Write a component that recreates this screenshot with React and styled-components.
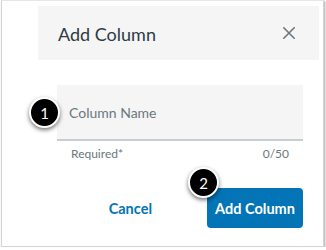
import React from "react";
import styled, { createGlobalStyle } from "styled-components";

const Global = createGlobalStyle`
  html, body { margin: 0; padding: 0; background: #ffffff; }
  body { font-family: Lato, "Open Sans", sans-serif; }
  * { box-sizing: border-box; }
`;

const Frame = styled.div`
  width: 323px;
  height: 247px;
  margin-left: 1px;
  border: 1px solid #d4d4d4;
  border-top-color: #e6e6e6;
  box-shadow: 1px 1px 2px rgba(0, 0, 0, 0.35);
  padding: 5px 4px 0 36px;
  background: #fff;
  display: flex;
  flex-direction: column;
`;

const Header = styled.div`
  height: 54px;
  background: #f5f5f5;
  display: flex;
  align-items: center;
  justify-content: space-between;
  padding: 0 24px 0 20px;
`;

const Title = styled.h2`
  margin: 0;
  font-size: 18px;
  font-weight: 400;
  color: #2d3b45;
  line-height: 1;
  padding-top: 1px;
`;

const CloseButton = styled.button`
  border: 0;
  background: none;
  padding: 0;
  width: 12px;
  height: 12px;
  display: flex;
  cursor: pointer;
`;

const Body = styled.div`
  padding: 25px 16px 0 19px;
  display: flex;
  flex-direction: column;
`;

const InputWrap = styled.div`
  position: relative;
`;

const Input = styled.div`
  height: 56px;
  background: #f5f5f5;
  border-bottom: 2px solid #c7cdd1;
  display: flex;
  align-items: center;
  padding: 1px 12px 0 12px;
  font-size: 14px;
  color: #6b7780;
`;

const Helper = styled.div`
  display: flex;
  justify-content: space-between;
  padding: 5px 14px 0 14px;
  font-size: 12px;
  color: #6b7780;
`;

const Actions = styled.div`
  display: flex;
  justify-content: flex-end;
  align-items: center;
  margin-top: 27px;
  gap: 55px;
`;

const TextButton = styled.button`
  border: 0;
  background: none;
  padding: 0;
  font-family: Lato, sans-serif;
  font-weight: 700;
  font-size: 14.5px;
  color: #0374b5;
`;

const PrimaryWrap = styled.div`
  position: relative;
`;

const PrimaryButton = styled.button`
  border: 0;
  border-radius: 4px;
  background: #0374b5;
  color: #fff;
  font-family: Lato, sans-serif;
  font-weight: 700;
  font-size: 14.5px;
  height: 40px;
  width: 96px;
  padding: 0;
`;

const Badge = styled.div`
  position: absolute;
  left: ${(p) => p.$left}px;
  top: ${(p) => p.$top}px;
  width: 31px;
  height: 31px;
  border-radius: 50%;
  background: #000;
  border: 2px solid #fff;
  box-shadow: 0 2px 4px rgba(0, 0, 0, 0.55);
  color: #fff;
  font-size: 15px;
  display: flex;
  align-items: center;
  justify-content: center;
  z-index: 2;
`;

export default function App() {
  return (
    <>
      <Global />
      <Frame>
        <Header>
          <Title>Add Column</Title>
          <CloseButton aria-label="Close">
            <svg width="12" height="12" viewBox="0 0 12 12">
              <path d="M0.8 0.8 L11.2 11.2 M11.2 0.8 L0.8 11.2" stroke="#6b7780" strokeWidth="1.6" strokeLinecap="round" />
            </svg>
          </CloseButton>
        </Header>
        <Body>
          <InputWrap>
            <Input>Column Name</Input>
            <Badge $left={-28} $top={12}>1</Badge>
          </InputWrap>
          <Helper>
            <span>Required*</span>
            <span>0/50</span>
          </Helper>
          <Actions>
            <TextButton>Cancel</TextButton>
            <PrimaryWrap>
              <PrimaryButton>Add Column</PrimaryButton>
              <Badge $left={-19} $top={-21}>2</Badge>
            </PrimaryWrap>
          </Actions>
        </Body>
      </Frame>
    </>
  );
}
